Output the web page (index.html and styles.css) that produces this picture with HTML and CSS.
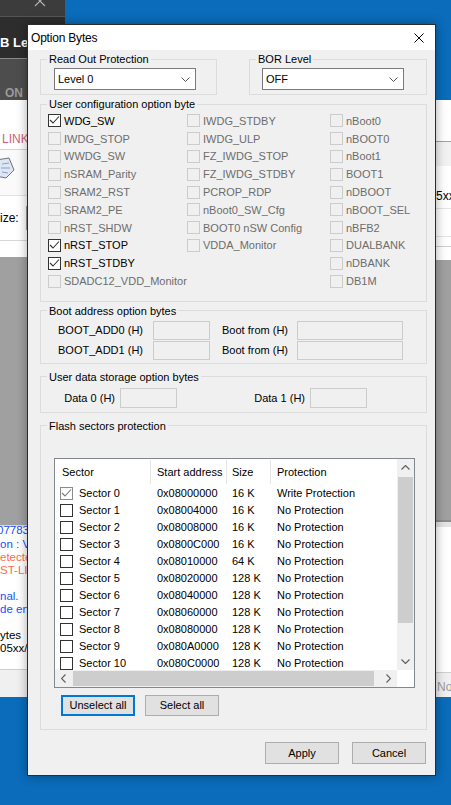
FILE: index.html
```html
<!DOCTYPE html>
<html lang="en">
<head>
  <meta charset="UTF-8">
  <title>Option Bytes</title>
  <link rel="stylesheet" href="styles.css">
</head>
<body>

  <div class="side-panel">
    <div class="panel-top">
      <svg class="panel-x" width="12" height="7" viewBox="0 0 12 7"><path d="M1 -4 L11 6 M11 -4 L1 6" stroke="#b0b0b0" stroke-width="1.2" fill="none"/></svg>
    </div>
    <div class="panel-title"><span class="clip">B Le</span></div>
    <div class="panel-tab">ON</div>
  </div>

  <div class="app">
    <div class="app-left">
      <div class="l-link">LINK</div>
      <div class="l-icon">
        <svg width="16" height="24" viewBox="0 0 16 24"><path d="M-4 4 L9 2 L14 14 L6 22 L-4 20 Z" fill="#dfe6f3" stroke="#6b7280"/><path d="M2 8 L9 7 M1 12 L10 12 M2 16 L8 17" stroke="#8aa0c8"/></svg>
      </div>
      <div class="l-size"><span>ize:</span><span class="size-box"></span></div>
      <div class="l-blank"></div>
      <div class="l-gray"></div>
      <div class="log">
        <div class="log-blue cut">077831</div>
        <div class="log-blue">on : V1</div>
        <div class="log-red">etected</div>
        <div class="log-red">ST-LINK</div>
        <div class="log-gap"></div>
        <div class="log-blue">nal.</div>
        <div class="log-blue">de en</div>
        <div class="log-gap"></div>
        <div>ytes</div>
        <div>05xx/</div>
      </div>
      <div class="status-row"></div>
    </div>

    <div class="app-right">
      <div class="r-head"></div>
      <div class="r-sub"></div>
      <div class="r-field">5xx</div>
      <div class="r-field2"></div>
      <div class="r-field3"></div>
      <div class="r-gray"></div>
      <div class="r-split"></div>
      <div class="r-white"></div>
      <div class="status-row"><span class="status-text">No</span></div>
    </div>
  </div>

  <div class="dialog">
    <div class="titlebar">
      <span class="title">Option Bytes</span>
      <svg width="10" height="10" viewBox="0 0 10 10"><path d="M0.5 0.5 L9.5 9.5 M9.5 0.5 L0.5 9.5" stroke="#000" stroke-width="1"/></svg>
    </div>

    <div class="dlg-body">
      <div class="top-row">
        <fieldset class="grp grp-rop">
          <legend>Read Out Protection</legend>
          <div class="grp-body">
            <div class="combo"><span>Level 0</span><svg width="9" height="5" viewBox="0 0 9 5"><polyline points="0.5,0.5 4.5,4.5 8.5,0.5" fill="none" stroke="#555"/></svg></div>
          </div>
        </fieldset>
        <fieldset class="grp grp-bor">
          <legend>BOR Level</legend>
          <div class="grp-body">
            <div class="combo"><span>OFF</span><svg width="9" height="5" viewBox="0 0 9 5"><polyline points="0.5,0.5 4.5,4.5 8.5,0.5" fill="none" stroke="#555"/></svg></div>
          </div>
        </fieldset>
      </div>

      <fieldset class="grp grp-user">
        <legend>User configuration option byte</legend>
        <div class="grp-body opt-cols">
          <div class="opt-col col-a">
            <div class="opt"><span class="cb"><svg width="11" height="11" viewBox="0 0 11 11"><polyline points="1,5 4,8 10,1.5" fill="none" stroke="#333" stroke-width="1.1"/></svg></span>WDG_SW</div>
            <div class="opt off"><span class="cb"></span>IWDG_STOP</div>
            <div class="opt off"><span class="cb"></span>WWDG_SW</div>
            <div class="opt off"><span class="cb"></span>nSRAM_Parity</div>
            <div class="opt off"><span class="cb"></span>SRAM2_RST</div>
            <div class="opt off"><span class="cb"></span>SRAM2_PE</div>
            <div class="opt off"><span class="cb"></span>nRST_SHDW</div>
            <div class="opt"><span class="cb"><svg width="11" height="11" viewBox="0 0 11 11"><polyline points="1,5 4,8 10,1.5" fill="none" stroke="#333" stroke-width="1.1"/></svg></span>nRST_STOP</div>
            <div class="opt"><span class="cb"><svg width="11" height="11" viewBox="0 0 11 11"><polyline points="1,5 4,8 10,1.5" fill="none" stroke="#333" stroke-width="1.1"/></svg></span>nRST_STDBY</div>
            <div class="opt off"><span class="cb"></span>SDADC12_VDD_Monitor</div>
          </div>
          <div class="opt-col col-b">
            <div class="opt off"><span class="cb"></span>IWDG_STDBY</div>
            <div class="opt off"><span class="cb"></span>IWDG_ULP</div>
            <div class="opt off"><span class="cb"></span>FZ_IWDG_STOP</div>
            <div class="opt off"><span class="cb"></span>FZ_IWDG_STDBY</div>
            <div class="opt off"><span class="cb"></span>PCROP_RDP</div>
            <div class="opt off"><span class="cb"></span>nBoot0_SW_Cfg</div>
            <div class="opt off"><span class="cb"></span>BOOT0 nSW Config</div>
            <div class="opt off"><span class="cb"></span>VDDA_Monitor</div>
          </div>
          <div class="opt-col">
            <div class="opt off"><span class="cb"></span>nBoot0</div>
            <div class="opt off"><span class="cb"></span>nBOOT0</div>
            <div class="opt off"><span class="cb"></span>nBoot1</div>
            <div class="opt off"><span class="cb"></span>BOOT1</div>
            <div class="opt off"><span class="cb"></span>nDBOOT</div>
            <div class="opt off"><span class="cb"></span>nBOOT_SEL</div>
            <div class="opt off"><span class="cb"></span>nBFB2</div>
            <div class="opt off"><span class="cb"></span>DUALBANK</div>
            <div class="opt off"><span class="cb"></span>nDBANK</div>
            <div class="opt off"><span class="cb"></span>DB1M</div>
          </div>
        </div>
      </fieldset>

      <fieldset class="grp grp-boot">
        <legend>Boot address option bytes</legend>
        <div class="grp-body boot-grid">
          <span class="lbl">BOOT_ADD0 (H)</span><span class="field"></span>
          <span class="lbl">Boot from (H)</span><span class="field"></span>
          <span class="lbl">BOOT_ADD1 (H)</span><span class="field"></span>
          <span class="lbl">Boot from (H)</span><span class="field"></span>
        </div>
      </fieldset>

      <fieldset class="grp grp-data">
        <legend>User data storage option bytes</legend>
        <div class="grp-body data-grid">
          <span class="lbl">Data 0 (H)</span><span class="field"></span>
          <span class="lbl">Data 1 (H)</span><span class="field"></span>
        </div>
      </fieldset>

      <fieldset class="grp grp-flash">
        <legend>Flash sectors protection</legend>
        <div class="grp-body">
          <div class="listview">
            <div class="lv-content">
              <div class="lv-row lv-head">
                <span>Sector</span><span>Start address</span><span>Size</span><span>Protection</span>
              </div>
              <div class="lv-row"><span><i class="cb cb-gray"><svg width="11" height="11" viewBox="0 0 11 11"><polyline points="1,5 4,8 10,1.5" fill="none" stroke="#777" stroke-width="1.1"/></svg></i>Sector 0</span><span>0x08000000</span><span>16 K</span><span>Write Protection</span></div>
              <div class="lv-row"><span><i class="cb"></i>Sector 1</span><span>0x08004000</span><span>16 K</span><span>No Protection</span></div>
              <div class="lv-row"><span><i class="cb"></i>Sector 2</span><span>0x08008000</span><span>16 K</span><span>No Protection</span></div>
              <div class="lv-row"><span><i class="cb"></i>Sector 3</span><span>0x0800C000</span><span>16 K</span><span>No Protection</span></div>
              <div class="lv-row"><span><i class="cb"></i>Sector 4</span><span>0x08010000</span><span>64 K</span><span>No Protection</span></div>
              <div class="lv-row"><span><i class="cb"></i>Sector 5</span><span>0x08020000</span><span>128 K</span><span>No Protection</span></div>
              <div class="lv-row"><span><i class="cb"></i>Sector 6</span><span>0x08040000</span><span>128 K</span><span>No Protection</span></div>
              <div class="lv-row"><span><i class="cb"></i>Sector 7</span><span>0x08060000</span><span>128 K</span><span>No Protection</span></div>
              <div class="lv-row"><span><i class="cb"></i>Sector 8</span><span>0x08080000</span><span>128 K</span><span>No Protection</span></div>
              <div class="lv-row"><span><i class="cb"></i>Sector 9</span><span>0x080A0000</span><span>128 K</span><span>No Protection</span></div>
              <div class="lv-row"><span><i class="cb"></i>Sector 10</span><span>0x080C0000</span><span>128 K</span><span>No Protection</span></div>
              <div class="lv-row"><span><i class="cb"></i>Sector 11</span><span>0x080E0000</span><span>128 K</span><span>No Protection</span></div>
            </div>
            <div class="vscroll">
              <span class="sb-btn"><svg width="9" height="5" viewBox="0 0 9 5"><polyline points="0.5,4.5 4.5,0.5 8.5,4.5" fill="none" stroke="#606060" stroke-width="1.2"/></svg></span>
              <span class="v-thumb"></span>
              <span class="sb-fill"></span>
              <span class="sb-btn"><svg width="9" height="5" viewBox="0 0 9 5"><polyline points="0.5,0.5 4.5,4.5 8.5,0.5" fill="none" stroke="#606060" stroke-width="1.2"/></svg></span>
            </div>
            <div class="hscroll">
              <span class="sb-btn"><svg width="5" height="9" viewBox="0 0 5 9"><polyline points="4.5,0.5 0.5,4.5 4.5,8.5" fill="none" stroke="#606060" stroke-width="1.2"/></svg></span>
              <span class="h-thumb"></span>
              <span class="sb-fill"></span>
              <span class="sb-btn"><svg width="5" height="9" viewBox="0 0 5 9"><polyline points="0.5,0.5 4.5,4.5 0.5,8.5" fill="none" stroke="#606060" stroke-width="1.2"/></svg></span>
            </div>
            <div class="sb-corner"></div>
          </div>
          <div class="list-btns">
            <button class="btn focus">Unselect all</button>
            <button class="btn">Select all</button>
          </div>
        </div>
      </fieldset>

      <div class="footer">
        <button class="btn btn-wide">Apply</button>
        <button class="btn btn-wide">Cancel</button>
      </div>
    </div>
  </div>

</body>
</html>
```

FILE: styles.css
```css
* {
  box-sizing: border-box;
}

body {
  margin: 0;
  width: 451px;
  height: 805px;
  overflow: hidden;
  position: relative;
  background-color: #0a6cba;
  font-family: 'Liberation Sans', Arial, sans-serif;
  font-size: 11px;
  color: #000;
}

/* dark tool window, top left */
.side-panel {
  position: absolute;
  left: 0;
  top: 0;
  width: 65px;
  height: 100px;
  background-color: #4d4d4d;
  overflow: hidden;
}

.panel-top {
  height: 17px;
  background-color: #3c3c3c;
  border-bottom: 1px solid #555;
}

.panel-x {
  display: block;
  margin-left: 34px;
}

.panel-title {
  height: 42px;
  padding-top: 18px;
  line-height: 16px;
  background-color: #2d2d2d;
  border-bottom: 1px solid #8a8a8a;
  color: #fff;
  font-size: 13px;
  font-weight: bold;
  white-space: nowrap;
}

.clip {
  display: block;
  width: 27px;
  overflow: hidden;
}

.panel-tab {
  padding: 27px 0 0 5px;
  line-height: 14px;
  color: #9a9a9a;
  font-size: 12px;
  font-weight: bold;
}

/* application window behind the dialog */
.app {
  position: absolute;
  left: 0;
  top: 100px;
  width: 451px;
  height: 597px;
  background-color: #fff;
  display: flex;
  justify-content: space-between;
}

.app-left,
.app-right {
  display: flex;
  flex-direction: column;
  overflow: hidden;
  white-space: nowrap;
  font-size: 12px;
}

.app-left {
  width: 27px;
}

.app-right {
  width: 30px;
}

.l-link {
  height: 50px;
  padding: 32px 0 0 2px;
  line-height: 14px;
  color: #cf6278;
  border-bottom: 1px solid #d4d4d4;
}

.l-icon {
  height: 46px;
  padding-top: 6px;
  background-color: #fafafa;
  border-bottom: 1px solid #e2e2e2;
}

.l-icon svg {
  display: block;
}

.l-size {
  height: 45px;
  display: flex;
  align-items: center;
  gap: 7px;
  border-bottom: 1px solid #d8d8d8;
}

.size-box {
  width: 30px;
  height: 24px;
  flex: none;
  border: 1px solid #9a9a9a;
  background-color: #fff;
}

.l-blank {
  height: 16px;
}

.l-gray {
  height: 270px;
  background-color: #a0a0a0;
  border-bottom: 2px solid #d8d8d8;
}

.log {
  height: 142px;
  line-height: 13px;
  font-size: 11.5px;
}

.log-blue {
  color: #2050ff;
}

.log-red {
  color: #ff6a4a;
}

.log-gap {
  height: 13px;
}

.cut {
  margin-top: -3px;
  margin-left: -3px;
}

.log div:nth-child(2) {
  margin-top: 1px;
}

.status-row {
  flex: 1;
  background-color: #f0f0f0;
  border-top: 1px solid #cfcfcf;
}

.status-text {
  display: block;
  padding: 7px 0 0 16px;
  line-height: 14px;
  color: #9a9a9a;
}

.r-head {
  height: 42px;
  border-bottom: 1px solid #a0a0a0;
}

.r-sub {
  height: 24px;
  background-color: #f2f2f2;
}

.r-field {
  height: 43px;
  padding: 23px 0 0 15px;
  line-height: 14px;
  border-bottom: 1px solid #e4e4e4;
}

.r-field2 {
  height: 28px;
  border-bottom: 1px solid #e4e4e4;
}

.r-field3 {
  height: 10px;
  border-bottom: 1px solid #cfcfcf;
}

.r-gray {
  height: 260px;
  margin-top: 13px;
  background-color: #a0a0a0;
}

.r-split {
  height: 7px;
  border-top: 2px solid #8c8c8c;
  background-color: #e4e4e4;
}

.r-white {
  height: 145px;
}

/* dialog window */
.dialog {
  position: absolute;
  left: 27px;
  top: 24px;
  width: 409px;
  height: 752px;
  border: 1px solid #2b2b2b;
  background-color: #f0f0f0;
  box-shadow: 0 0 10px rgba(0, 0, 0, 0.35);
  display: flex;
  flex-direction: column;
}

.titlebar {
  height: 25px;
  flex: none;
  background-color: #fff;
  display: flex;
  align-items: center;
  justify-content: space-between;
  padding: 0 11px 0 3px;
}

.title {
  font-size: 12px;
  letter-spacing: -0.2px;
}

.titlebar svg {
  display: block;
}

.dlg-body {
  flex: 1;
  padding: 2px 8px 0 12px;
}

.top-row {
  display: flex;
  justify-content: space-between;
}

.grp {
  margin: 0;
  padding: 0;
  min-width: 0;
  border: 1px solid #dcdcdc;
}

.grp legend {
  margin-left: 6px;
  padding: 0 2px;
  line-height: 14px;
  font-size: 11px;
}

.grp-rop {
  width: 177px;
}

.grp-rop .grp-body {
  padding: 2px 0 4px 13px;
}

.grp-bor {
  width: 178px;
}

.grp-bor .grp-body {
  padding: 2px 0 4px 12px;
}

.combo {
  width: 142px;
  height: 22px;
  border: 1px solid #7a7a7a;
  background-color: #fff;
  display: flex;
  align-items: center;
  justify-content: space-between;
  padding: 0 5px 0 3px;
}

.combo svg {
  display: block;
}

.grp-user {
  margin-top: 2px;
}

.opt-cols {
  display: flex;
  padding: 1px 0 11px 7px;
}

.col-a {
  width: 139px;
}

.col-b {
  width: 143px;
}

.opt {
  height: 17.8px;
  display: flex;
  align-items: center;
  white-space: nowrap;
}

.cb {
  width: 13px;
  height: 13px;
  flex: none;
  margin-right: 3px;
  border: 1px solid #333;
  background-color: #fff;
  display: flex;
  align-items: center;
  justify-content: center;
}

.cb svg {
  display: block;
}

.opt.off {
  color: #6d6d6d;
}

.opt.off .cb {
  border-color: #cccccc;
  background-color: #f0f0f0;
}

.grp-boot {
  margin-top: 2px;
}

.boot-grid {
  display: grid;
  grid-template-columns: 112px 57px 87px 106px;
  row-gap: 1px;
  align-items: center;
  padding: 3px 0 3px 0;
}

.lbl {
  text-align: right;
  padding-right: 10px;
  white-space: nowrap;
}

.field {
  height: 19px;
  border: 1px solid #cccccc;
  background-color: #f0f0f0;
}

.boot-grid .lbl:nth-child(3),
.boot-grid .lbl:nth-child(7) {
  padding-right: 9px;
}

.grp-data {
  margin-top: 6px;
}

.data-grid {
  display: grid;
  grid-template-columns: 79px 57px 133px 57px;
  align-items: center;
  padding: 4px 0 4px 0;
}

.data-grid .lbl {
  padding-right: 5px;
}

.data-grid .field {
  height: 20px;
}

.grp-flash {
  margin-top: 6px;
}

.grp-flash .grp-body {
  padding: 25px 0 13px 13px;
}

.listview {
  width: 361px;
  height: 230px;
  border: 1px solid #828790;
  background-color: #fff;
  display: grid;
  grid-template-columns: 342px 17px;
  grid-template-rows: 211px 17px;
}

.lv-content {
  overflow: hidden;
}

.lv-row {
  display: grid;
  grid-template-columns: 96px 76px 44px 1fr;
  height: 17px;
  align-items: center;
  white-space: nowrap;
}

.lv-row span {
  padding-left: 6px;
  display: flex;
  align-items: center;
}

.lv-row span:first-child {
  padding-left: 5px;
}

.lv-row span:nth-child(3) {
  padding-left: 5px;
}

.lv-row .cb {
  margin-right: 6px;
}

.cb-gray {
  border-color: #8a8a8a;
}

.lv-head {
  height: 26px;
}

.lv-head span {
  height: 24px;
  border-right: 1px solid #e5e5e5;
}

.lv-head span:first-child {
  padding-left: 7px;
}

.lv-head span:last-child {
  border-right: none;
}

.vscroll,
.hscroll {
  background-color: #f0f0f0;
  display: flex;
}

.vscroll {
  flex-direction: column;
}

.sb-btn {
  width: 17px;
  height: 17px;
  flex: none;
  display: flex;
  align-items: center;
  justify-content: center;
}

.sb-fill {
  flex: 1;
}

.v-thumb {
  height: 146px;
  margin: 1px 1px 0 1px;
  background-color: #cdcdcd;
}

.h-thumb {
  width: 301px;
  margin: 1px 0 1px 1px;
  background-color: #cdcdcd;
}

.sb-corner {
  background-color: #fff;
}

.list-btns {
  display: flex;
  gap: 10px;
  margin: 7px 0 0 7px;
}

.btn {
  width: 74px;
  height: 21px;
  padding: 0;
  border: 1px solid #adadad;
  background-color: #e1e1e1;
  font-family: 'Liberation Sans', Arial, sans-serif;
  font-size: 11px;
  color: #000;
}

.btn.focus {
  border: 2px solid #0078d7;
}

.footer {
  display: flex;
  justify-content: flex-end;
  gap: 13px;
  margin: 12px 1px 0 0;
}

.btn-wide {
  height: 22px;
}
```
